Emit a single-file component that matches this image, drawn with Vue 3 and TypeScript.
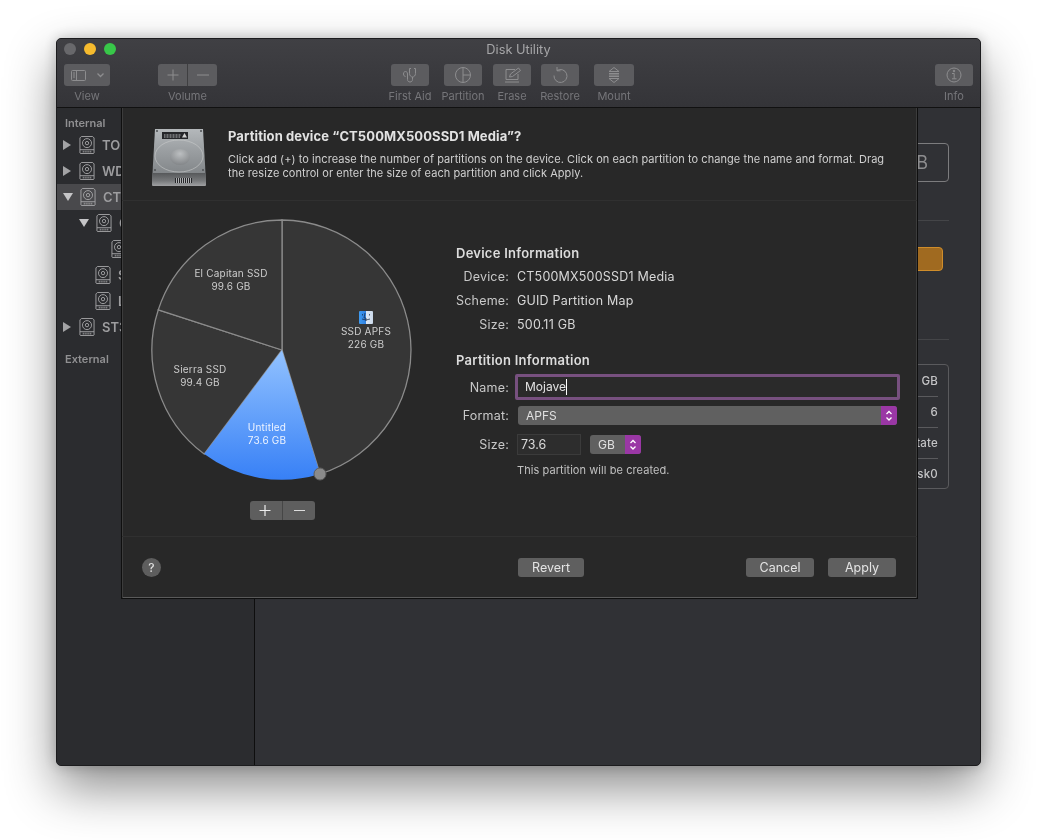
<script setup lang="ts">
interface ToolItem { label: string; cls: string; icon: string }
const tools: ToolItem[] = [
  { label: 'First Aid', cls: 'aid', icon: 'aid' },
  { label: 'Partition', cls: 'part', icon: 'partition' },
  { label: 'Erase', cls: 'erase', icon: 'erase' },
  { label: 'Restore', cls: 'restore', icon: 'restore' },
  { label: 'Mount', cls: 'mount', icon: 'mount' }
]
interface Row { text: string; arrow: '' | 'open' | 'closed'; level: number; selected?: boolean }
const rows: Row[] = [
  { text: 'TO', arrow: 'closed', level: 0 },
  { text: 'WDC', arrow: 'closed', level: 0 },
  { text: 'CT', arrow: 'open', level: 0, selected: true },
  { text: 'C', arrow: 'open', level: 1 },
  { text: 'C', arrow: '', level: 2 },
  { text: 'S', arrow: '', level: 1 },
  { text: 'L', arrow: '', level: 1 },
  { text: 'ST3', arrow: 'closed', level: 0 }
]
const slices = [
  { d: 'M142 142 L142 12 A130 130 0 0 1 180 266 Z', fill: '#363636' },
  { d: 'M142 142 L64.2 246.1 A130 130 0 0 1 18.3 101.8 Z', fill: '#363636' },
  { d: 'M142 142 L18.3 101.8 A130 130 0 0 1 142 12 Z', fill: '#363636' }
]
const pieLabels = [
  { x: 91, y: 69, lines: ['El Capitan SSD', '99.6 GB'], light: false },
  { x: 226, y: 127, lines: ['SSD APFS', '226 GB'], light: false },
  { x: 60, y: 165, lines: ['Sierra SSD', '99.4 GB'], light: false },
  { x: 127, y: 223, lines: ['Untitled', '73.6 GB'], light: true }
]
</script>

<template>
  <div class="page">
    <div class="window">
      <header class="toolbar">
        <div class="titlebar">
          <div class="lights">
            <i class="light grey"></i><i class="light yellow"></i><i class="light green"></i>
          </div>
          <span class="title">Disk Utility</span>
        </div>
        <div class="tools">
          <div class="tool view">
            <div class="tbtn">
              <svg width="46" height="22" viewBox="0 0 46 22" fill="none" stroke="#8d8d8f" stroke-width="1">
                <rect x="7.5" y="6.5" width="14" height="10" rx="1" />
                <path d="M12.5 6.5v10M9 9h2M9 11h2M9 13h2" />
                <path d="M33.5 9.5l3 3 3-3" stroke-width="1.3" />
              </svg>
            </div>
            <span class="tlabel">View</span>
          </div>
          <div class="tool volume">
            <div class="tbtn split">
              <svg width="29" height="22" viewBox="0 0 29 22" fill="none" stroke="#8d8d8f" stroke-width="1">
                <path d="M15 5.5v11M9.5 11h11" />
              </svg>
              <svg width="29" height="22" viewBox="0 0 29 22" fill="none" stroke="#8d8d8f" stroke-width="1">
                <path d="M9 11h12" />
              </svg>
            </div>
            <span class="tlabel">Volume</span>
          </div>
          <div v-for="t in tools" :key="t.label" class="tool" :class="t.cls">
            <div class="tbtn">
              <svg width="24" height="22" viewBox="0 0 24 22" fill="none" stroke="#8d8d8f" stroke-width="1">
                <g v-if="t.icon === 'aid'">
                  <path d="M13 4.500h-1.500v5c0 2 1.500 3.500 3 3.500s3-1.500 3-3.500v-5H16" />
                  <path d="M14.500 13v2.500c0 1.500-1 2.500-2.500 2.500s-2.500-1-2.500-2.500v-5.500c0-1.500-.7-2.500-2-2.500s-2 1-2 2.500 1 2.500 2 2.500" />
                </g>
                <g v-else-if="t.icon === 'partition'">
                  <circle cx="12" cy="11" r="7.500" />
                  <path d="M12 3.500V18.500M12 11h7.500" />
                </g>
                <g v-else-if="t.icon === 'erase'">
                  <path d="M6 15.500V5.500h9M18 10v5.500H6M5 18h14" />
                  <path d="M9.500 13l1-3 8-6 2 2.500-8 6z" />
                </g>
                <g v-else-if="t.icon === 'restore'">
                  <path d="M9 6.500a6.500 6.500 0 1 1-3 5" />
                  <path d="M9 3v3.800h3.500" />
                </g>
                <g v-else>
                  <path d="M12 3.500l5 4H7zM12 18.500l5-4H7zM7 9.500h10M7 11h10M7 12.500h10" />
                </g>
              </svg>
            </div>
            <span class="tlabel">{{ t.label }}</span>
          </div>
          <div class="tool info">
            <div class="tbtn">
              <svg width="24" height="22" viewBox="0 0 24 22" fill="none" stroke="#8d8d8f" stroke-width="1">
                <circle cx="12" cy="11" r="7" />
                <path d="M10 9.500h2.200v5M10 14.800h4.500" />
                <circle cx="12" cy="7" r=".8" fill="#8d8d8f" />
              </svg>
            </div>
            <span class="tlabel">Info</span>
          </div>
        </div>
      </header>

      <div class="body">
        <aside class="sidebar">
          <div class="group">Internal</div>
          <div
            v-for="(r, i) in rows"
            :key="i"
            class="row"
            :class="['level' + r.level, { selected: r.selected }]"
          >
            <span class="arrow" :class="r.arrow"></span>
            <svg class="disk" width="16" height="18" viewBox="0 0 17 19" fill="none" stroke="#a3a3a5" stroke-width="1">
              <path d="M2.500.5h12l1.500 1.500v16l-.5.500h-14l-.5-.5V2z" />
              <path d="M1 14.500h15" />
              <circle cx="8.500" cy="7.500" r="4.800" />
              <circle cx="8.500" cy="7.500" r="1.800" />
              <path d="M4 16.500h9" stroke-width="2" stroke-dasharray="1 1" />
            </svg>
            <span class="rname">{{ r.text }}</span>
          </div>
          <div class="group external">External</div>
        </aside>

        <main class="content">
          <div class="capacity">GB</div>
          <hr class="rule first" />
          <div class="action">
            <div class="orange"></div>
          </div>
          <hr class="rule second" />
          <div class="table">
            <div class="cell">500.11 GB</div>
            <div class="cell">6</div>
            <div class="cell">State</div>
            <div class="cell">disk0</div>
          </div>
        </main>
      </div>

      <section class="sheet">
        <div class="sheet-head">
          <svg class="hdd" width="58" height="60" viewBox="0 0 58 60">
            <defs>
              <linearGradient id="hddBody" x1="0" y1="0" x2="0" y2="1">
                <stop offset="0" stop-color="#b4b8bb" />
                <stop offset=".5" stop-color="#9a9ea1" />
                <stop offset="1" stop-color="#83878a" />
              </linearGradient>
              <radialGradient id="hub" cx=".5" cy=".3" r=".8">
                <stop offset="0" stop-color="#bcbfc1" />
                <stop offset="1" stop-color="#7b7e81" />
              </radialGradient>
              <linearGradient id="hddFoot" x1="0" y1="0" x2="0" y2="1">
                <stop offset="0" stop-color="#56585a" />
                <stop offset=".6" stop-color="#77797b" />
                <stop offset="1" stop-color="#a0a1a3" />
              </linearGradient>
            </defs>
            <path d="M5 2h48l2.500 44H2.500z" fill="url(#hddBody)" />
            <path d="M2 46h54v12q0 1-1 1H3q-1 0-1-1z" fill="url(#hddFoot)" />
            <ellipse cx="29" cy="29" rx="24" ry="16" fill="none" stroke="#c9cbcc" stroke-width="1" opacity=".6" />
            <ellipse cx="30" cy="30" rx="10" ry="8" fill="url(#hub)" />
            <rect x="12" y="5" width="26" height="7" fill="#25262a" />
            <path d="M14 8h17M14 10h16" stroke="#b5b6b8" stroke-width="1" stroke-dasharray="1 .5" />
            <path d="M34.500 6l2.500 4.500h-5z" fill="#d0d0d0" />
            <rect x="25" y="51" width="17" height="5" fill="#26272a" />
            <path d="M26 53.500h15" stroke="#b0b1b3" stroke-width="5" stroke-dasharray="1 1" />
            <g fill="#4e5053">
              <circle cx="7" cy="4" r="1" /><circle cx="51" cy="4" r="1" />
              <circle cx="5" cy="43" r="1" /><circle cx="53" cy="43" r="1" />
            </g>
          </svg>
          <div class="head-text">
            <h1>Partition device “CT500MX500SSD1 Media”?</h1>
            <p>Click add (+) to increase the number of partitions on the device. Click on each partition to change the name and format. Drag the resize control or enter the size of each partition and click Apply.</p>
          </div>
        </div>

        <div class="sheet-body">
          <div class="pie-col">
            <svg class="pie" width="284" height="284" viewBox="0 0 284 284">
              <defs>
                <linearGradient id="blue" x1="0" y1="142" x2="0" y2="272" gradientUnits="userSpaceOnUse">
                  <stop offset="0" stop-color="#92c2ff" />
                  <stop offset="1" stop-color="#3780f6" />
                </linearGradient>
                <linearGradient id="finder" x1="0" y1="0" x2="1" y2="0">
                  <stop offset="0" stop-color="#3f9bf0" />
                  <stop offset=".5" stop-color="#2f7fe0" />
                  <stop offset=".5" stop-color="#dfe9f5" />
                  <stop offset="1" stop-color="#c9d8ea" />
                </linearGradient>
              </defs>
              <path
                v-for="(s, i) in slices"
                :key="i"
                :d="s.d"
                :fill="s.fill"
                stroke="#8b8b8b"
                stroke-width="1.300"
              />
              <path d="M142 142 L180 266 A130 130 0 0 1 64.2 246.1 Z" fill="url(#blue)" />
              <text
                v-for="l in pieLabels"
                :key="l.lines[0]"
                class="pie-text"
                :class="{ light: l.light }"
                text-anchor="middle"
                :x="l.x"
              >
                <tspan :x="l.x" :y="l.y">{{ l.lines[0] }}</tspan>
                <tspan :x="l.x" :y="l.y + 13">{{ l.lines[1] }}</tspan>
              </text>
              <rect x="219" y="103" width="14" height="13" rx="1" fill="url(#finder)" />
              <path d="M225 105l-1 5h2v3M222 111q4 2 8 0M222.500 106v1.500M229.500 106v1.500" fill="none" stroke="#17263d" stroke-width=".7" />
              <circle cx="180" cy="266" r="6" fill="#8a8a8a" stroke="#5e5e5e" stroke-width="1" />
            </svg>
            <div class="plusminus">
              <button class="pm">
                <svg width="33" height="19" viewBox="0 0 33 19" fill="none" stroke="#eee" stroke-width="1.200">
                  <path d="M15 4v11M9.500 9.500h11" />
                </svg>
              </button>
              <button class="pm">
                <svg width="32" height="19" viewBox="0 0 32 19" fill="none" stroke="#ddd" stroke-width="1.200">
                  <path d="M11 9.500h11" />
                </svg>
              </button>
            </div>
          </div>

          <div class="info-col">
            <h2 class="dev-h">Device Information</h2>
            <div class="kv"><span class="k">Device:</span><span class="v">CT500MX500SSD1 Media</span></div>
            <div class="kv"><span class="k">Scheme:</span><span class="v">GUID Partition Map</span></div>
            <div class="kv"><span class="k">Size:</span><span class="v">500.11 GB</span></div>

            <h2 class="par-h">Partition Information</h2>
            <div class="field name-row">
              <span class="k">Name:</span>
              <div class="name-input"><span class="typed">Mojave</span><i class="caret"></i></div>
            </div>
            <div class="field format-row">
              <span class="k">Format:</span>
              <div class="select wide">
                <span>APFS</span>
                <span class="stepper">
                  <svg width="10" height="15" viewBox="0 0 10 15" fill="none" stroke="#fff" stroke-width="1.300"><path d="M2.500 6l2.500-2.500L7.500 6M2.500 9.500L5 12l2.500-2.500" /></svg>
                </span>
              </div>
            </div>
            <div class="field size-row">
              <span class="k">Size:</span>
              <div class="size-input">73.6</div>
              <div class="select unit">
                <span>GB</span>
                <span class="stepper">
                  <svg width="10" height="15" viewBox="0 0 10 15" fill="none" stroke="#fff" stroke-width="1.300"><path d="M2.500 6l2.500-2.500L7.500 6M2.500 9.500L5 12l2.500-2.500" /></svg>
                </span>
              </div>
            </div>
            <p class="note">This partition will be created.</p>
          </div>
        </div>

        <div class="sheet-foot">
          <span class="help">?</span>
          <button class="btn revert">Revert</button>
          <button class="btn cancel">Cancel</button>
          <button class="btn apply">Apply</button>
        </div>
      </section>
    </div>
  </div>
</template>

<style>
html, body { margin: 0; background: #fff; }
</style>

<style scoped>
* { box-sizing: border-box; }
.page {
  width: 1037px;
  height: 840px;
  padding: 38px 56px 74px;
  overflow: hidden;
  font-family: Inter, "Liberation Sans", sans-serif;
}
.window {
  position: relative;
  width: 925px;
  height: 728px;
  border: 1px solid #1c1c1e;
  border-radius: 5px;
  background: #303135;
  box-shadow: 0 22px 50px rgba(0, 0, 0, .45), 0 0 14px rgba(0, 0, 0, .22);
  display: flex;
  flex-direction: column;
  overflow: hidden;
  filter: blur(.3px);
}
.toolbar {
  height: 69px;
  flex: none;
  background: linear-gradient(#404044, #343438);
  border-bottom: 1px solid #111;
}
.titlebar { position: relative; height: 25px; }
.lights { display: flex; gap: 8px; padding: 4px 0 0 7px; }
.light { width: 12px; height: 12px; border-radius: 50%; display: block; }
.grey { background: #68686b; }
.yellow { background: #f6bb2e; }
.green { background: #38c749; }
.title {
  position: absolute;
  left: 0;
  right: 0;
  top: 3px;
  text-align: center;
  font-size: 12.800px;
  line-height: 15px;
  color: #a6a6a8;
}
.tools { display: flex; padding: 0 7px; }
.tool { display: flex; flex-direction: column; align-items: center; width: 38px; }
.tbtn {
  width: 100%;
  height: 22px;
  border-radius: 3px;
  background: #5c5c5f;
  display: flex;
}
.tbtn > svg { flex: none; margin: auto; }
.tlabel {
  margin-top: 4px;
  font-size: 11px;
  line-height: 13px;
  color: #76767a;
  white-space: nowrap;
}
.view { width: 46px; }
.volume { width: 59px; margin-left: 48px; }
.split > svg:first-child { border-right: 1px solid #3f3f41; width: 30px; }
.aid { margin-left: 174px; }
.part { margin-left: 15px; }
.erase { margin-left: 11px; }
.restore { margin-left: 10px; }
.mount { margin-left: 15px; width: 40px; }
.info { margin-left: auto; }

.body { flex: 1; display: flex; min-height: 0; }
.sidebar {
  width: 198px;
  flex: none;
  background: #2b2c2f;
  border-right: 1px solid #0e0e0e;
  padding-top: 8px;
}
.group {
  padding-left: 8px;
  height: 16px;
  font-size: 11px;
  line-height: 15px;
  font-weight: 600;
  color: #909092;
}
.external { margin-top: 12px; }
.row {
  height: 26px;
  display: flex;
  align-items: center;
  font-size: 13px;
  font-weight: 600;
  color: #9d9d9f;
  white-space: nowrap;
}
.row.selected { background: #49494c; }
.arrow { width: 9px; height: 10px; flex: none; margin-left: 6px; }
.arrow.closed {
  border-left: 8px solid #a3a3a5;
  border-top: 5px solid transparent;
  border-bottom: 5px solid transparent;
}
.arrow.open {
  border-top: 8px solid #c5c5c7;
  border-left: 5px solid transparent;
  border-right: 5px solid transparent;
  height: 8px;
}
.disk { flex: none; margin: 0 6px 0 7px; }
.rname { margin-left: 1px; }
.level1 .arrow { margin-left: 22px; }
.level2 .arrow { margin-left: 38px; }

.content {
  flex: 1;
  min-width: 0;
  padding: 35px 31px 0 0;
  display: flex;
  flex-direction: column;
  align-items: flex-end;
}
.capacity {
  width: 200px;
  height: 39px;
  border: 1px solid #7c7c7e;
  border-radius: 4px;
  padding-right: 20px;
  text-align: right;
  font-size: 18px;
  line-height: 37px;
  color: #8d8d8f;
}
.rule {
  width: 400px;
  margin: 0;
  border: 0;
  border-top: 1px solid #444548;
}
.rule.first { margin-top: 38px; }
.action { height: 118px; width: 400px; padding: 26px 6px 0 0; display: flex; justify-content: flex-end; }
.orange {
  width: 200px;
  height: 24px;
  background: #a06a20;
  border: 1px solid #cf8d2b;
  border-radius: 4px;
}
.table {
  margin-top: 24px;
  width: 300px;
  height: 125px;
  border: 1px solid #5a5a5d;
  border-radius: 4px;
  padding: 1px 10px 0 0;
}
.cell {
  height: 31px;
  line-height: 30px;
  text-align: right;
  font-size: 11.500px;
  letter-spacing: .2px;
  font-weight: 500;
  color: #c4c4c6;
  border-bottom: 1px solid #5a5a5d;
}
.cell:last-child { border-bottom: 0; }

.sheet {
  position: absolute;
  left: 64px;
  top: 69px;
  width: 797px;
  height: 491px;
  background: #282828;
  border: 1px solid #0f0f0f;
  border-top: 0;
  box-shadow: inset 1px 0 0 #3c3c3c, inset -1px 0 0 #3c3c3c, inset 0 -1px 0 #5a5a5a;
  display: flex;
  flex-direction: column;
  color: #d8d8d8;
}
.sheet-head {
  height: 93px;
  flex: none;
  display: flex;
  border-bottom: 1px solid #303030;
  padding: 19px 0 0 28px;
}
.hdd { flex: none; }
.head-text { margin-left: 20px; width: 664px; }
h1 {
  margin: 1px 0 7px;
  font-size: 13px;
  line-height: 17px;
  font-weight: 650;
  letter-spacing: .1px;
  color: #e2e2e2;
}
.head-text p {
  margin: 0;
  font-size: 11px;
  line-height: 14px;
  letter-spacing: .057px;
  color: #d0d0d0;
}
.sheet-body { flex: 1; display: flex; min-height: 0; border-bottom: 1px solid #303030; }
.pie-col {
  width: 334px;
  flex: none;
  padding: 7px 0 0 18px;
  display: flex;
  flex-direction: column;
  align-items: flex-start;
}
.pie { display: block; flex: none; }
.pie-text {
  font-size: 10px;
  letter-spacing: .2px;
  fill: #cdcdcd;
  font-family: Inter, "Liberation Sans", sans-serif;
}
.pie-text.light { fill: #eef4ff; }
.plusminus {
  margin: 9px 0 0 110px;
  display: flex;
  width: 65px;
  height: 19px;
  border-radius: 3px;
  overflow: hidden;
  background: #5e5e5e;
}
.pm {
  padding: 0;
  border: 0;
  background: none;
  height: 19px;
  display: block;
  width: 32px;
}
.pm:first-child { width: 33px; border-right: 1px solid #464646; }
.pm svg { display: block; }

.info-col { flex: 1; min-width: 0; padding-top: 43px; }
h2 {
  margin: 0;
  font-size: 13px;
  line-height: 18px;
  font-weight: 600;
  letter-spacing: .25px;
  color: #dcdcdc;
}
.kv { display: flex; height: 24px; align-items: center; }
.dev-h { margin-bottom: 2px; }
.par-h { margin-top: 15px; }
.k {
  width: 53px;
  flex: none;
  text-align: right;
  font-size: 12.500px;
  letter-spacing: .2px;
  color: #c8c8c8;
}
.v { margin-left: 8px; font-size: 12.500px; letter-spacing: .2px; color: #d8d8d8; }
.field { display: flex; align-items: center; }
.name-row { margin-top: 5px; height: 26px; }
.name-input {
  margin-left: 6px;
  width: 385px;
  height: 26px;
  border: 3px solid #77507f;
  border-radius: 2px;
  background: #2a2a2a;
  font-size: 12px;
  line-height: 20px;
  padding-left: 7px;
  display: flex;
  color: #e4e4e4;
}
.caret { width: 1px; height: 16px; margin-top: 2px; background: #fff; display: block; }
.format-row { margin-top: 6px; height: 19px; }
.select {
  height: 19px;
  background: #606060;
  border-radius: 3px;
  display: flex;
  align-items: center;
  justify-content: space-between;
  font-size: 12px;
  color: #e0e0e0;
  overflow: hidden;
}
.wide { margin-left: 9px; width: 379px; padding-left: 8px; }
.stepper {
  width: 16px;
  height: 19px;
  background: #9a37a5;
  display: flex;
  align-items: center;
  justify-content: center;
}
.size-row { margin-top: 9px; height: 21px; }
.size-input {
  margin-left: 8px;
  width: 64px;
  height: 21px;
  background: #2d2d2d;
  border: 1px solid #3b3b3b;
  padding-left: 3px;
  font-size: 12.500px;
  line-height: 19px;
  color: #d8d8d8;
}
.unit { margin-left: 9px; width: 51px; padding-left: 8px; }
.note {
  margin: 8px 0 0 61px;
  font-size: 11px;
  line-height: 14px;
  letter-spacing: .07px;
  color: #c0c0c0;
}

.sheet-foot {
  height: 61px;
  flex: none;
  display: flex;
  padding: 21px 0 0 20px;
  align-items: flex-start;
}
.help {
  width: 19px;
  height: 19px;
  border-radius: 50%;
  background: #5e5e5e;
  color: #ddd;
  font-size: 12px;
  font-weight: 500;
  line-height: 19px;
  text-align: center;
}
.btn {
  height: 19px;
  padding: 0;
  border: 0;
  border-radius: 3px;
  background: #5f5f5f;
  color: #e4e4e4;
  font: 12.500px/19px Inter, "Liberation Sans", sans-serif;
}
.revert { width: 66px; margin-left: 357px; }
.cancel { width: 68px; margin-left: 162px; }
.apply { width: 68px; margin-left: 14px; }
</style>
